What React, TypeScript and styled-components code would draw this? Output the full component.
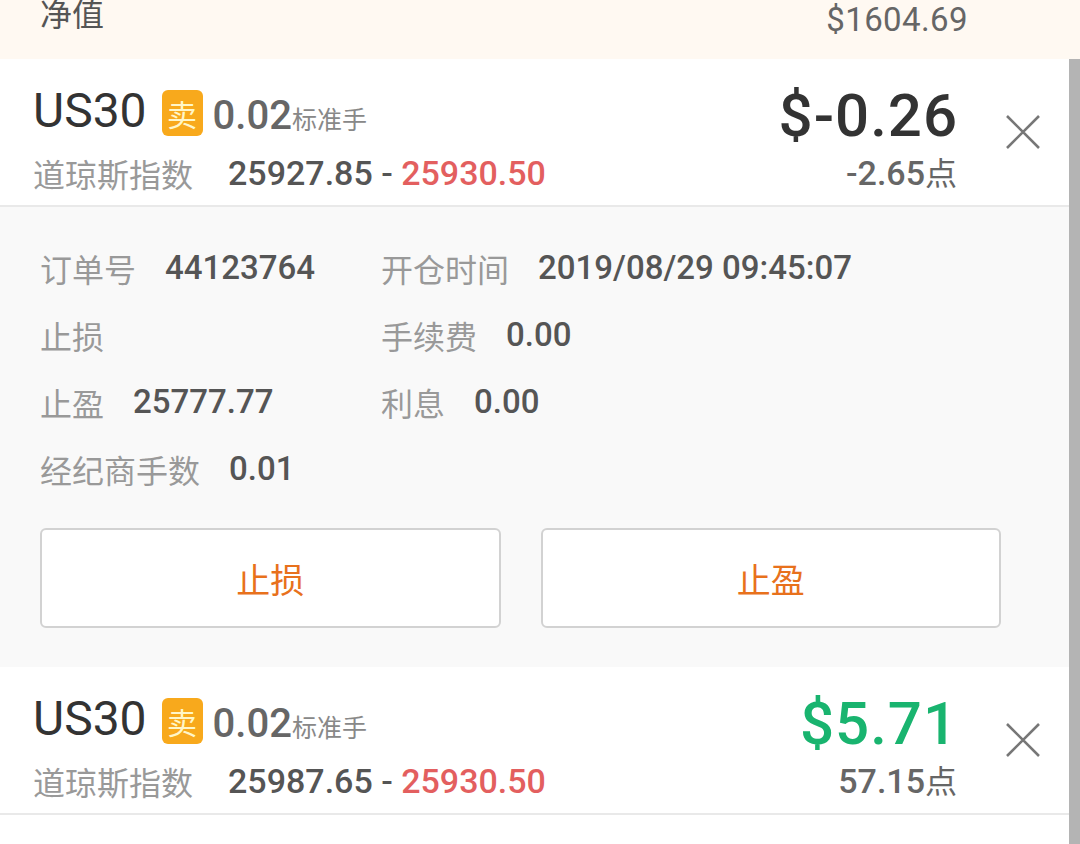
import React from "react";
import styled, { createGlobalStyle } from "styled-components";

const GlobalStyle = createGlobalStyle`
  html, body {
    margin: 0;
    padding: 0;
    background: #ffffff;
  }
  body {
    font-family: "Roboto", "Noto Sans CJK SC", sans-serif;
    width: 1080px;
    height: 844px;
    overflow: hidden;
  }
`;

const Page = styled.div`
  width: 1080px;
  height: 844px;
  display: flex;
  flex-direction: column;
  overflow: hidden;
`;

const Banner = styled.div`
  height: 59px;
  flex-shrink: 0;
  background: #fff9f2;
  display: flex;
  justify-content: space-between;
  align-items: flex-start;
  padding: 0 112px 0 40px;
  overflow: hidden;
`;
const BannerLabel = styled.div`
  font-family: "Noto Sans CJK SC", sans-serif;
  font-size: 32px;
  line-height: 32px;
  color: #555;
  margin-top: -4px;
`;
const BannerValue = styled.div`
  font-size: 33px;
  line-height: 33px;
  letter-spacing: 0.4px;
  color: #666;
  margin-top: 3px;
`;

const Body = styled.div`
  flex: 1;
  display: flex;
  min-height: 0;
`;
const List = styled.div`
  flex: 1;
  display: flex;
  flex-direction: column;
`;
const ScrollTrack = styled.div`
  width: 11px;
  flex-shrink: 0;
  background: #b4b4b4;
`;

const Card = styled.div`
  display: flex;
  align-items: flex-start;
  height: 148px;
  flex-shrink: 0;
  box-sizing: border-box;
  padding: 0 28px 0 33px;
  background: #fff;
  border-bottom: 2px solid #e9e9e9;
`;
const CardMain = styled.div`
  flex: 1;
  display: flex;
  flex-direction: column;
  gap: 18px;
  padding-top: 28px;
`;
const TitleRow = styled.div`
  display: flex;
  align-items: center;
  height: 48px;
`;
const Symbol = styled.span`
  font-size: 48px;
  line-height: 48px;
  color: #333;
  margin-right: 15px;
`;
const SideBadge = styled.span`
  display: inline-flex;
  align-items: center;
  justify-content: center;
  width: 41px;
  height: 46px;
  border-radius: 6px;
  background: #f8a91c;
  color: #fff6c8;
  font-family: "Noto Sans CJK SC", sans-serif;
  font-size: 30px;
  margin-right: 10px;
  margin-top: 4px;
`;
const Lots = styled.span`
  display: flex;
  align-items: baseline;
  margin-top: 8px;
`;
const LotsValue = styled.span`
  font-size: 40px;
  font-weight: 500;
  color: #666;
`;
const LotsUnit = styled.span`
  font-family: "Noto Sans CJK SC", sans-serif;
  font-size: 25px;
  color: #888;
`;
const SubRow = styled.div`
  display: flex;
  align-items: center;
  height: 40px;
`;
const IndexName = styled.span`
  font-family: "Noto Sans CJK SC", sans-serif;
  font-size: 32px;
  color: #999;
  margin-right: 35px;
`;
const Price = styled.span<{ $ask?: boolean }>`
  font-size: 34px;
  font-weight: 500;
  color: ${(p) => (p.$ask ? "#e35f5f" : "#555")};
`;

const CardSide = styled.div`
  display: flex;
  flex-direction: column;
  align-items: flex-end;
  gap: 11px;
  padding-top: 33px;
`;
const Profit = styled.div<{ $up?: boolean }>`
  height: 48px;
  line-height: 48px;
  font-size: 60px;
  font-weight: 500;
  letter-spacing: 1px;
  margin-right: -1px;
  color: ${(p) => (p.$up ? "#19b46f" : "#333")};
`;
const Points = styled.div`
  display: flex;
  align-items: baseline;
  height: 40px;
  line-height: 40px;
  font-size: 34px;
  font-weight: 500;
  color: #666;
`;
const PointsUnit = styled.span`
  font-family: "Noto Sans CJK SC", sans-serif;
  font-size: 32px;
  font-weight: 400;
  color: #666;
`;
const CloseButton = styled.div`
  align-self: center;
  width: 36px;
  height: 36px;
  margin-left: 48px;
  display: flex;
  align-items: center;
  justify-content: center;
`;

const Detail = styled.div`
  background: #f9f9f9;
  padding: 27px 68px 39px 40px;
  display: flex;
  flex-direction: column;
`;
const InfoGrid = styled.div`
  display: grid;
  grid-template-columns: 341px 1fr;
  grid-auto-rows: 67px;
`;
const InfoCell = styled.div`
  display: flex;
  align-items: center;
  gap: 29px;
`;
const InfoLabel = styled.span`
  font-family: "Noto Sans CJK SC", sans-serif;
  font-size: 32px;
  color: #999;
`;
const InfoValue = styled.span`
  font-size: 33px;
  font-weight: 500;
  color: #555;
`;
const Actions = styled.div`
  display: grid;
  grid-template-columns: 1fr 1fr;
  gap: 40px;
  margin-top: 26px;
`;
const ActionButton = styled.button`
  height: 100px;
  background: #fff;
  border: 2px solid #d2d2d2;
  border-radius: 6px;
  color: #e8711c;
  font-family: "Noto Sans CJK SC", sans-serif;
  font-size: 34px;
  cursor: pointer;
`;

const CloseIcon = () => (
  <svg width="36" height="36" viewBox="0 0 36 36">
    <path d="M2 2 L34 34 M34 2 L2 34" stroke="#777" strokeWidth="2.6" fill="none" />
  </svg>
);

interface Order {
  bid: string;
  ask: string;
  profit: string;
  points: string;
  up: boolean;
}

const orders: Order[] = [
  { bid: "25927.85", ask: "25930.50", profit: "$-0.26", points: "-2.65", up: false },
  { bid: "25987.65", ask: "25930.50", profit: "$5.71", points: "57.15", up: true },
];

const OrderCard = ({ order }: { order: Order }) => (
  <Card>
    <CardMain>
      <TitleRow>
        <Symbol>US30</Symbol>
        <SideBadge>卖</SideBadge>
        <Lots>
          <LotsValue>0.02</LotsValue>
          <LotsUnit>标准手</LotsUnit>
        </Lots>
      </TitleRow>
      <SubRow>
        <IndexName>道琼斯指数</IndexName>
        <Price>{order.bid}&nbsp;-&nbsp;</Price>
        <Price $ask>{order.ask}</Price>
      </SubRow>
    </CardMain>
    <CardSide>
      <Profit $up={order.up}>{order.profit}</Profit>
      <Points>
        {order.points}
        <PointsUnit>点</PointsUnit>
      </Points>
    </CardSide>
    <CloseButton>
      <CloseIcon />
    </CloseButton>
  </Card>
);

const details = [
  ["订单号", "44123764"],
  ["开仓时间", "2019/08/29 09:45:07"],
  ["止损", ""],
  ["手续费", "0.00"],
  ["止盈", "25777.77"],
  ["利息", "0.00"],
  ["经纪商手数", "0.01"],
];

const App = () => {
  return (
    <Page>
      <GlobalStyle />
      <Banner>
        <BannerLabel>净值</BannerLabel>
        <BannerValue>$1604.69</BannerValue>
      </Banner>
      <Body>
        <List>
          <OrderCard order={orders[0]} />
          <Detail>
            <InfoGrid>
              {details.map(([label, value]) => (
                <InfoCell key={label}>
                  <InfoLabel>{label}</InfoLabel>
                  {value && <InfoValue>{value}</InfoValue>}
                </InfoCell>
              ))}
            </InfoGrid>
            <Actions>
              <ActionButton>止损</ActionButton>
              <ActionButton>止盈</ActionButton>
            </Actions>
          </Detail>
          <OrderCard order={orders[1]} />
        </List>
        <ScrollTrack />
      </Body>
    </Page>
  );
};

export default App;
